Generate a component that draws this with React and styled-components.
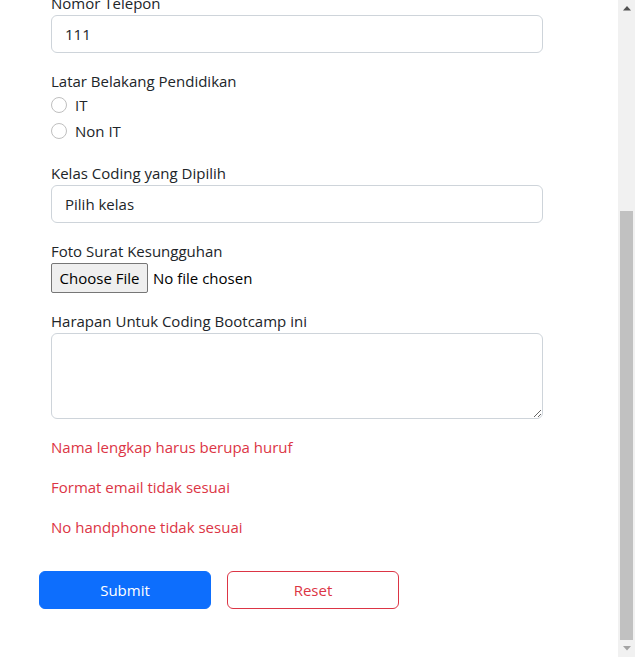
import React from "react";
import styled, { createGlobalStyle } from "styled-components";

const GlobalStyle = createGlobalStyle`
  html, body { margin: 0; padding: 0; background: #fff; overflow: hidden; }
  * { box-sizing: border-box; }
  body {
    font-family: "Open Sans", "Noto Sans", sans-serif;
    font-size: 15px;
    line-height: 24px;
    color: #212529;
  }
`;

const Page = styled.div`
  display: flex;
  height: 657px;
  width: 635px;
`;

const Viewport = styled.div`
  flex: 1;
  overflow: hidden;
`;

const Form = styled.form`
  width: 543px;
  padding-left: 51px;
  margin-top: -9px;
`;

const Group = styled.div`
  display: flex;
  flex-direction: column;
  margin-bottom: 16px;
`;

const Label = styled.label`
  display: block;
  line-height: 24px;
`;

const controlBase = `
  display: block;
  width: 100%;
  font: inherit;
  color: #212529;
  background: #fff;
  border: 1px solid #ced4da;
  border-radius: 6px;
  padding: 6px 13px;
  outline: none;
`;

const TextInput = styled.input`
  ${controlBase}
  height: 38px;
`;

const Select = styled.select`
  ${controlBase}
  height: 38px;
  appearance: none;
  -webkit-appearance: none;
`;

const TextArea = styled.textarea`
  ${controlBase}
  height: 86px;
  resize: vertical;
`;

const RadioRow = styled.label`
  display: flex;
  align-items: center;
  gap: 8px;
  height: 24px;
  margin-bottom: 2px;
  cursor: pointer;
`;

const RadioCircle = styled.span`
  width: 16px;
  height: 16px;
  border-radius: 50%;
  border: 1px solid #bfbfbf;
  background: #fff;
  flex: none;
`;

const FileRow = styled.div`
  display: flex;
  align-items: center;
  gap: 5px;
  height: 30px;
`;

const FileButton = styled.button`
  height: 30px;
  width: 97px;
  padding: 0;
  font: inherit;
  color: #000;
  background: #efefef;
  border: 1px solid #767676;
  border-radius: 2px;
`;

const FileName = styled.span`
  color: #000;
`;

const ErrorText = styled.p`
  margin: 0 0 16px;
  color: #dc3545;
  line-height: 24px;
`;

const Actions = styled.div`
  display: flex;
  gap: 16px;
  margin: 32px 0 0 -12px;
`;

const ActionButton = styled.button`
  width: 172px;
  height: 38px;
  border-radius: 6px;
  font: inherit;
  border: 1px solid ${(p) => (p.$variant === "primary" ? "#0d6efd" : "#dc3545")};
  background: ${(p) => (p.$variant === "primary" ? "#0d6efd" : "#fff")};
  color: ${(p) => (p.$variant === "primary" ? "#fff" : "#dc3545")};
  cursor: pointer;
`;

const Scrollbar = styled.div`
  width: 17px;
  flex: none;
  display: flex;
  flex-direction: column;
  background: #f1f1f1;
`;

const ScrollArrow = styled.div`
  height: 17px;
  display: flex;
  align-items: center;
  justify-content: center;
`;

const Track = styled.div`
  flex: 1;
  padding: 194px 2px 0;
`;

const Thumb = styled.div`
  height: 429px;
  background: #c1c1c1;
`;

const Arrow = ({ down, color }) => (
  <svg width="8" height="5" viewBox="0 0 8 5">
    <path d={down ? "M0 0 H8 L4 4.5 Z" : "M0 4.5 H8 L4 0 Z"} fill={color} />
  </svg>
);

export default function App() {
  return (
    <Page>
      <GlobalStyle />
      <Viewport>
        <Form onSubmit={(e) => e.preventDefault()}>
          <Group>
            <Label htmlFor="telp">Nomor Telepon</Label>
            <TextInput id="telp" type="text" defaultValue="111" />
          </Group>
          <Group>
            <Label>Latar Belakang Pendidikan</Label>
            <RadioRow>
              <RadioCircle />
              IT
            </RadioRow>
            <RadioRow>
              <RadioCircle />
              Non IT
            </RadioRow>
          </Group>
          <Group>
            <Label htmlFor="kelas">Kelas Coding yang Dipilih</Label>
            <Select id="kelas" defaultValue="">
              <option value="">Pilih kelas</option>
            </Select>
          </Group>
          <Group>
            <Label>Foto Surat Kesungguhan</Label>
            <FileRow>
              <FileButton type="button">Choose File</FileButton>
              <FileName>No file chosen</FileName>
            </FileRow>
          </Group>
          <Group>
            <Label htmlFor="harapan">Harapan Untuk Coding Bootcamp ini</Label>
            <TextArea id="harapan" />
          </Group>
          <ErrorText>Nama lengkap harus berupa huruf</ErrorText>
          <ErrorText>Format email tidak sesuai</ErrorText>
          <ErrorText>No handphone tidak sesuai</ErrorText>
          <Actions>
            <ActionButton type="submit" $variant="primary">Submit</ActionButton>
            <ActionButton type="reset" $variant="danger">Reset</ActionButton>
          </Actions>
        </Form>
      </Viewport>
      <Scrollbar>
        <ScrollArrow>
          <Arrow color="#505050" />
        </ScrollArrow>
        <Track>
          <Thumb />
        </Track>
        <ScrollArrow>
          <Arrow down color="#a3a3a3" />
        </ScrollArrow>
      </Scrollbar>
    </Page>
  );
}
